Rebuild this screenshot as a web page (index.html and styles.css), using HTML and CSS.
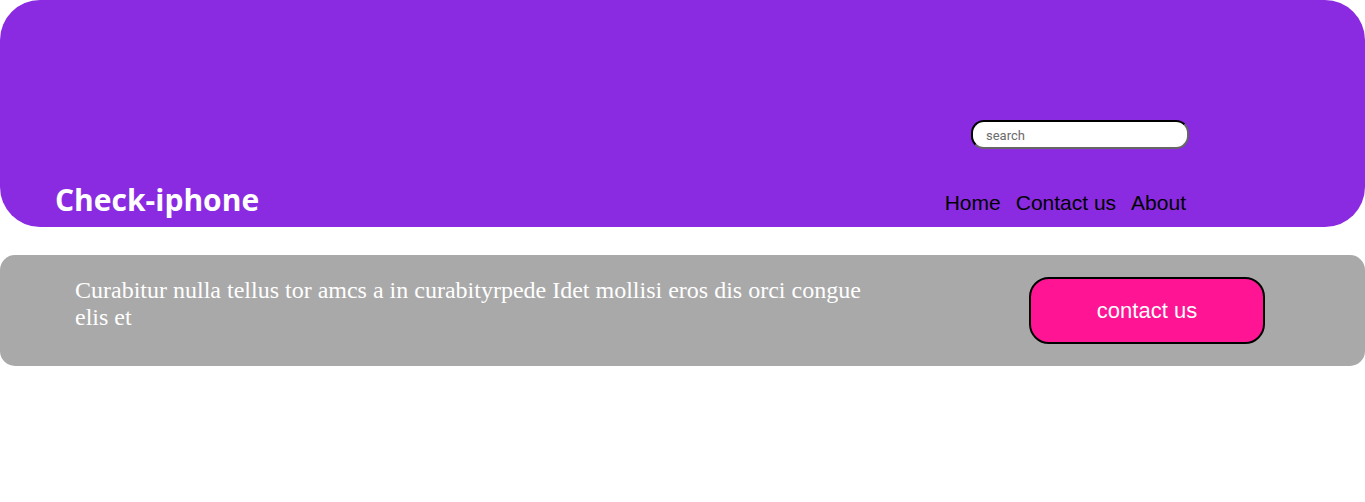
FILE: index.html
```html
<!DOCTYPE html>
<html>
<head>
<meta charset="utf-8">
<link rel="stylesheet" href="styles.css">
</head>
<body>
<header class="header">
  <div class="search-row">
    <input class="search" type="text" placeholder="search">
  </div>
  <div class="bottom-row">
    <div class="logo">Check-iphone</div>
    <nav class="nav">
      <a href="#">Home</a>
      <a href="#">Contact us</a>
      <a href="#">About</a>
    </nav>
  </div>
</header>
<section class="banner">
  <p class="banner-text">Curabitur nulla tellus tor amcs a in curabityrpede Idet mollisi eros dis orci congue elis et</p>
  <button class="cta">contact us</button>
</section>
</body>
</html>
```
FILE: styles.css
```css
html, body {
  margin: 0;
  padding: 0;
  background: #fff;
}
.header {
  background: #8a2be2;
  height: 227px;
  border-radius: 40px;
  box-sizing: border-box;
  padding: 120px 176px 0 55px;
  display: flex;
  flex-direction: column;
}
.search-row {
  display: flex;
  justify-content: flex-end;
}
.search {
  width: 218px;
  height: 29px;
  box-sizing: border-box;
  border-radius: 13px;
  border: 2px inset #555;
  border-color: #222 #666 #666 #222;
  padding: 1px 0 0 13px;
  font-family: Roboto, "Liberation Sans", sans-serif;
  font-size: 13px;
  outline: none;
  background: #fff;
}
.search::placeholder { color: #6b6b6b; }
.bottom-row {
  margin-top: 31px;
  display: flex;
  justify-content: space-between;
  align-items: flex-end;
}
.logo {
  font-family: "Open Sans", sans-serif;
  font-weight: 700;
  font-size: 30px;
  color: #fff;
  line-height: 40px;
}
.nav {
  display: flex;
  gap: 15px;
  padding-bottom: 5px;
  margin-right: 3px;
}
.nav a {
  font-family: "Liberation Sans", Arial, sans-serif;
  font-size: 21px;
  color: #000;
  text-decoration: none;
  line-height: 24px;
}
.banner {
  margin-top: 28px;
  background: #a9a9a9;
  height: 111px;
  border-radius: 15px;
  display: flex;
  align-items: center;
  justify-content: space-between;
  padding: 0 100px 0 75px;
  box-sizing: border-box;
}
.banner-text {
  margin: 0;
  width: 800px;
  font-family: "Liberation Serif", "Times New Roman", serif;
  font-size: 24px;
  line-height: 27px;
  color: #fff;
  align-self: flex-start;
  margin-top: 22px;
}
.cta {
  width: 236px;
  height: 67px;
  background: #ff1493;
  border: 2px solid #000;
  border-radius: 20px;
  color: #fff;
  font-family: "Liberation Sans", Arial, sans-serif;
  font-size: 22px;
  cursor: pointer;
}
```
